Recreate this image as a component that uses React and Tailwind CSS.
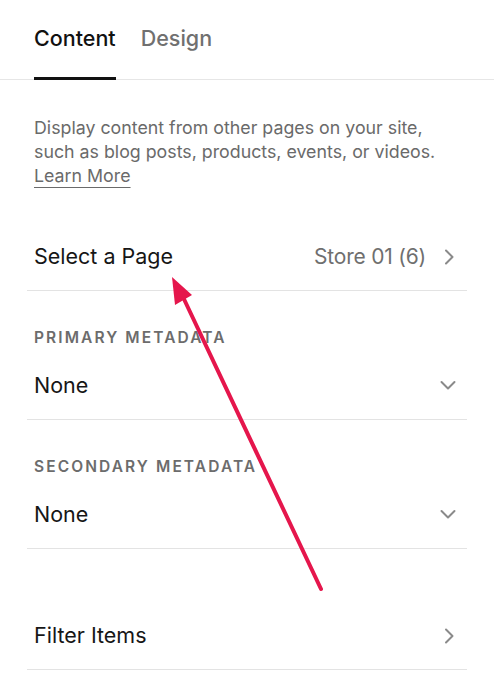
import { useState } from 'react'

const FONT = { fontFamily: 'Inter, "Liberation Sans", sans-serif' }

function ChevronRight() {
  return (
    <svg width="12" height="16" viewBox="0 0 12 16" fill="none" stroke="#8a8a8a" strokeWidth="2" strokeLinecap="round" strokeLinejoin="round">
      <path d="M3 1.5l6.5 6.5-6.5 6.5" />
    </svg>
  )
}

function ChevronDown() {
  return (
    <svg width="16" height="12" viewBox="0 0 16 12" fill="none" stroke="#8a8a8a" strokeWidth="2" strokeLinecap="round" strokeLinejoin="round">
      <path d="M1.5 3l6.5 6.5 6.5-6.5" />
    </svg>
  )
}

function NavRow({ label, value }) {
  return (
    <div className="h-[68px] flex items-center justify-between pl-[7px] pr-[12px] border-b border-[#e3e3e3]">
      <span className="text-[21.5px] text-[#161616]">{label}</span>
      <div className="flex items-center gap-[17px]">
        {value && <span className="text-[21px] tracking-[-0.01em] text-[#6f6f6f]">{value}</span>}
        <ChevronRight />
      </div>
    </div>
  )
}

function SelectGroup({ title }) {
  return (
    <div className="pt-[37px] border-b border-[#e3e3e3]">
      <div className="pl-[7px] h-[20px] flex items-center text-[15.5px] font-semibold tracking-[0.135em] text-[#6c6c6c]">
        {title}
      </div>
      <div className="h-[28px] mt-[23px] mb-[20px] flex items-center justify-between pl-[7px] pr-[11px]">
        <span className="text-[21.5px] text-[#161616]">None</span>
        <ChevronDown />
      </div>
    </div>
  )
}

export default function App() {
  const [tab, setTab] = useState('content')

  return (
    <div className="relative w-[494px] h-[700px] bg-white overflow-hidden" style={FONT}>
      {/* Tabs */}
      <div className="flex gap-[25px] px-[34px] h-[80px] border-b border-[#e6e6e6]">
        {['content', 'design'].map((t) => (
          <button
            key={t}
            onClick={() => setTab(t)}
            className={`relative h-full pt-[22px] flex items-start text-[21.5px] font-medium capitalize ${
              tab === t ? 'text-[#111]' : 'text-[#707070]'
            }`}
          >
            {t}
            {tab === t && <span className="absolute left-0 right-0 -bottom-px h-[3px] bg-[#111]" />}
          </button>
        ))}
      </div>

      <div className="px-[27px]">
        {/* Description */}
        <p className="pt-[36px] pl-[7px] text-[17.8px] leading-[24px] text-[#6a6a6a]">
          Display content from other pages on your site,
          <br />
          such as blog posts, products, events, or videos.
          <br />
          <a href="#" className="underline underline-offset-[5px] decoration-1">Learn More</a>
        </p>

        <div className="mt-[35px]">
          <NavRow label="Select a Page" value="Store 01 (6)" />
        </div>

        <SelectGroup title="PRIMARY METADATA" />
        <SelectGroup title="SECONDARY METADATA" />

        <div className="mt-[53px]">
          <NavRow label="Filter Items" />
        </div>
      </div>

      {/* Annotation arrow */}
      <svg className="absolute inset-0 pointer-events-none" width="494" height="700" viewBox="0 0 494 700">
        <line x1="321" y1="589" x2="183" y2="297" stroke="#e5164c" strokeWidth="4" strokeLinecap="round" />
        <polygon points="172,277 192,295 175,305" fill="#e5164c" />
      </svg>
    </div>
  )
}
